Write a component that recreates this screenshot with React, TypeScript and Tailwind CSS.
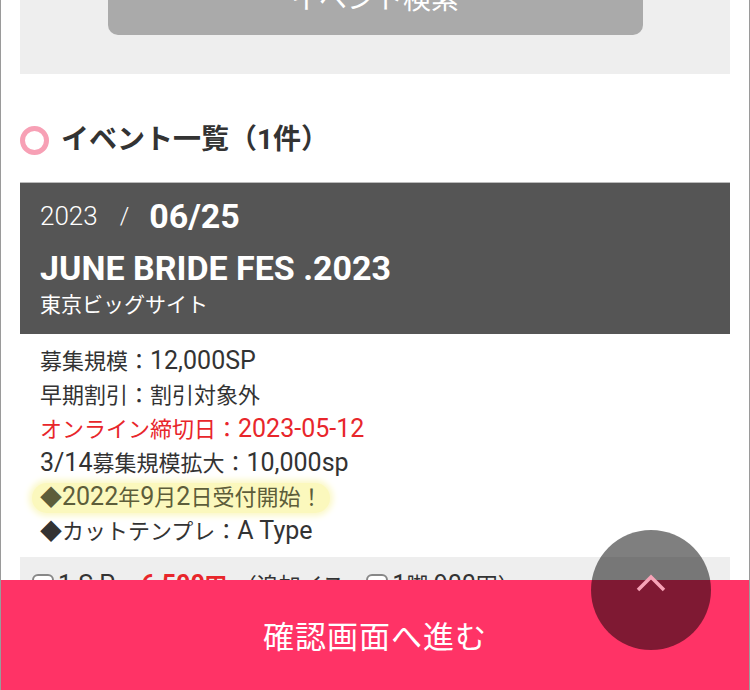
import React from 'react'

const font = "font-['Roboto','Noto_Sans_CJK_JP',sans-serif]"

// latin runs render a bit larger than the kana/kanji around them
const Mixed = ({ text }: { text: string }) => {
  const parts = text.split(/([A-Za-z0-9,.\-\/ ]+)/)
  return (
    <>
      {parts.map((p, i) =>
        /[A-Za-z0-9]/.test(p) ? (
          <span key={i} className="text-[25px] leading-none">{p}</span>
        ) : (
          <React.Fragment key={i}>{p}</React.Fragment>
        )
      )}
    </>
  )
}

const details = [
  { text: '募集規模：12,000SP', color: 'text-[#333333]' },
  { text: '早期割引：割引対象外', color: 'text-[#333333]' },
  { text: 'オンライン締切日：2023-05-12', color: 'text-[#e8262b]' },
  { text: '3/14募集規模拡大：10,000sp', color: 'text-[#333333]' },
]

const Checkbox = () => (
  <span className="inline-block w-[22px] h-[22px] rounded-[6px] border-2 border-[#888] bg-white mr-1 align-middle" />
)

const App = () => {
  return (
    <div className={`${font} relative h-[690px] w-[750px] overflow-hidden bg-white border-x border-[#9a9a9a]`}>
      <div className="px-[19px]">
        {/* search panel */}
        <div className="h-[74px] bg-[#eeeeee] flex justify-center">
          <div className="w-[535px] h-[70px] -mt-[35px] bg-[#aaaaaa] rounded-[10px] flex items-center justify-center text-white text-[28px]">
            イベント検索
          </div>
        </div>

        {/* heading */}
        <div className="pt-[46px] pb-[22px]">
          <div className="h-[40px] flex items-center gap-3">
            <span className="w-[29px] h-[29px] rounded-full border-[5px] border-[#f7a0b5]" />
            <h2 className="text-[28px] font-bold text-[#333333]">イベント一覧（1件）</h2>
          </div>
        </div>

        {/* event card */}
        <div className="bg-[#555555] border-t border-[#bbbbbb] px-5 pt-[13px] pb-[15px] text-white">
          <div className="h-[40px] flex items-center">
            <span className="text-[26px] font-light">2023</span>
            <span className="text-[24px] font-light ml-[22px] mr-[20px]">/</span>
            <span className="text-[34px] font-bold">06/25</span>
          </div>
          <div className="mt-[14px] text-[34px] font-bold leading-[36px]">JUNE BRIDE FES .2023</div>
          <div className="text-[21px] leading-[28px] mt-[5px]">東京ビッグサイト</div>
        </div>

        {/* details */}
        <div className="pt-[11px] pb-[8px] px-5 text-[22px] leading-[34px]">
          {details.map((d, i) => (
            <div key={i} className={d.color}>
              <Mixed text={d.text} />
            </div>
          ))}
          <div>
            <span className="inline-block -ml-2 px-2 rounded-full bg-[#fbf8bd] shadow-[0_0_6px_3px_#fbf8c6] text-[#5d5d3a] leading-[30px]">
              <Mixed text="◆2022年9月2日受付開始！" />
            </span>
          </div>
          <div className="text-[#333333]">
            <Mixed text="◆カットテンプレ：A Type" />
          </div>
        </div>

        {/* price row */}
        <div className="bg-[#eeeeee] h-[60px] pt-[10px] px-3 text-[22px] text-[#333333] whitespace-nowrap">
          <Checkbox />
          <span className="align-middle">
            <Mixed text="1 S P " />
          </span>
          <span className="align-middle text-[#e8262b] font-bold ml-5">
            <Mixed text="6,500" />円
          </span>
          <span className="align-middle ml-2">（追加イス　</span>
          <Checkbox />
          <span className="align-middle">
            <Mixed text="1" />脚 <Mixed text="900" />円）
          </span>
        </div>
      </div>

      {/* footer button */}
      <div className="absolute left-0 right-0 top-[580px] h-[110px] pt-[6px] bg-[#ff3366] flex items-center justify-center text-white text-[31px] tracking-[1px]">
        確認画面へ進む
      </div>

      {/* scroll to top */}
      <div className="absolute left-[590px] top-[530px] w-[120px] h-[120px] rounded-full bg-black/50 flex items-start justify-center pt-[44px]">
        <svg width="30" height="18" viewBox="0 0 30 18" fill="none">
          <path d="M2 16 L15 3 L28 16" stroke="#f7a3b7" strokeWidth="3.5" />
        </svg>
      </div>
    </div>
  )
}

export default App
